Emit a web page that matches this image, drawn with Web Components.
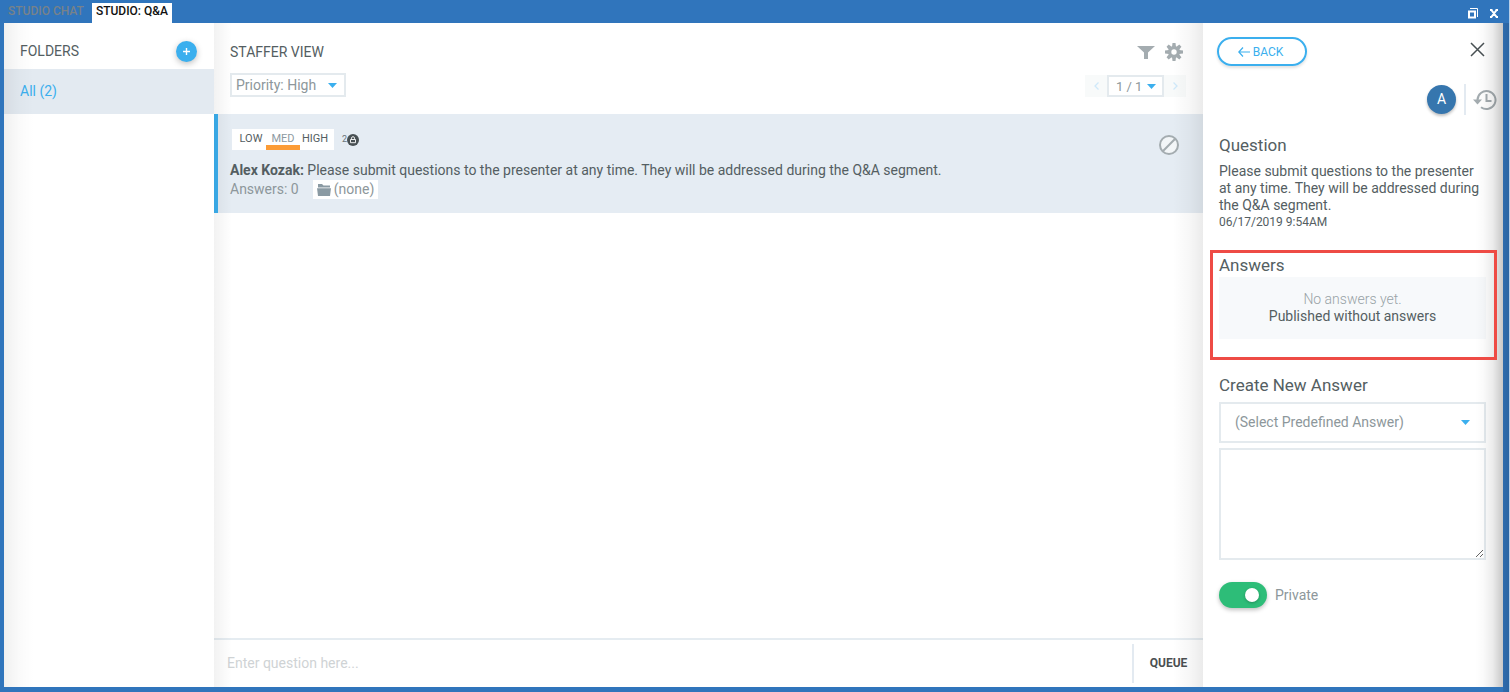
<!DOCTYPE html>
<html lang="en">
<head>
<meta charset="utf-8">
<title>Studio: Q&amp;A</title>
<style>
  html, body { height: 100%; margin: 0; }
  body { font-family: Roboto, "Liberation Sans", sans-serif; font-size: 14px; line-height: 17px; color: #545e62; background: #3075bc; }
</style>
</head>
<body>
<studio-window></studio-window>

<script>
const base = `
  *, *::before, *::after { box-sizing: border-box; }
  button, input, select, textarea { font: inherit; color: inherit; margin: 0; padding: 0; border: 0; background: none; border-radius: 0; outline: 0; }
  button { cursor: pointer; }
  h1, h2, p { margin: 0; font-weight: 400; font-size: inherit; }
  svg { display: block; flex: none; }
`;
class Base extends HTMLElement {
  constructor() {
    super();
    this.attachShadow({ mode: "open" }).innerHTML = `<style>${base}${this.constructor.css}</style>${this.render()}`;
  }
  render() { return "<slot></slot>"; }
}

/* Drop-down with a blue caret */
class DropDown extends Base {
  static css = `
    :host { display: inline-grid; align-items: center; border: 2px solid #e4eaee; background: #fff; color: #8d979b; }
    select { grid-area: 1 / 1; width: 100%; height: 100%; appearance: none; padding: 0 var(--pad-right, 26px) 0 var(--pad-left, 4px); }
    svg { grid-area: 1 / 1; justify-self: end; margin-right: var(--caret-gap, 7px); pointer-events: none; }
  `;
  render() {
    return `<select aria-label="${this.getAttribute("label")}"><option>${this.getAttribute("value")}</option></select>
      <svg width="9" height="5" viewBox="0 0 9 5"><path d="M0 0h9L4.500 5z" fill="#3bafee"/></svg>`;
  }
}
customElements.define("drop-down", DropDown);

class TitleBar extends Base {
  static css = `
    :host { display: flex; align-items: flex-end; height: 23px; padding-left: 4px; color: #fff; }
    nav { display: flex; flex: 1; }
    a { font-size: 12px; font-weight: 500; line-height: 17px; height: 20px; padding: 0 4px; color: #77828a; text-decoration: none; margin-right: 4px; }
    a[aria-current] { background: #fff; color: #111; }
    .tools { display: flex; gap: 11px; align-items: center; height: 20px; padding-right: 10px; }
  `;
  render() {
    return `<nav><a href="#chat">STUDIO CHAT</a><a href="#qa" aria-current="page">STUDIO: Q&amp;A</a></nav>
      <div class="tools">
        <button aria-label="Restore"><svg width="10" height="11" viewBox="0 0 10 11" fill="none" stroke="#fff"><path d="M2 .5h7.500v8.500" /><path d="M1 3.500h6v6H1z" stroke-width="2"/></svg></button>
        <button aria-label="Close"><svg width="10" height="9" viewBox="0 0 10 9" fill="none" stroke="#fff" stroke-width="2"><path d="M1 1h2.500M6.500 1H9M1 8h2.500M6.500 8H9M2 .5l6 8M8 .5l-6 8"/></svg></button>
      </div>`;
  }
}
customElements.define("title-bar", TitleBar);

class FolderList extends Base {
  static css = `
    :host { display: block; position: relative; background: #fff; }
    :host::after { content: ""; position: absolute; inset: 0 auto 0 0; width: 30px; pointer-events: none; background: linear-gradient(to right, rgba(0,0,0,.06), rgba(0,0,0,.02) 50%, transparent); }
    header { display: flex; align-items: center; justify-content: space-between; height: 46px; padding: 11px 17px 0 16px; }
    button { width: 21px; height: 21px; border-radius: 50%; background: #3bafee; display: grid; place-items: center; box-shadow: 0 2px 6px rgba(0,0,0,.25); }
    a { display: block; line-height: 45px; padding-left: 16px; background: #e3eaf1; color: #3bafee; text-decoration: none; }
  `;
  render() {
    return `<header><h2>FOLDERS</h2><button aria-label="Add folder"><svg width="7" height="7" viewBox="0 0 7 7"><path d="M3.500 0v7M0 3.500h7" stroke="#fff" stroke-width="1.400"/></svg></button></header>
      <a href="#all">All (2)</a>`;
  }
}
customElements.define("folder-list", FolderList);

class PagerControl extends Base {
  static css = `
    :host { display: flex; height: 22px; font-size: 13px; }
    button { width: 22px; background: #f8fafa; display: grid; place-items: center; }
    drop-down { width: 57px; --pad-left: 7px; --pad-right: 20px; --caret-gap: 6px; }
  `;
  render() {
    return `<button aria-label="Previous page"><svg width="5" height="8" viewBox="0 0 5 8"><path d="M4.500.5L1 4l3.500 3.500" fill="none" stroke="#cfe9fa" stroke-width="1.300"/></svg></button>
      <drop-down label="Page" value="1 / 1"></drop-down>
      <button aria-label="Next page"><svg width="5" height="8" viewBox="0 0 5 8"><path d="M.5.5L4 4 .5 7.500" fill="none" stroke="#cfe9fa" stroke-width="1.300"/></svg></button>`;
  }
}
customElements.define("pager-control", PagerControl);

class QuestionCard extends Base {
  static css = `
    :host { display: flex; justify-content: space-between; align-items: flex-start; height: 99px; background: #e5ecf3; border-left: 4px solid #3bafee; padding: 15px 24px 0 12px; }
    .top { display: flex; align-items: center; margin-left: 2px; }
    .priority { display: flex; background: #fff; width: 102px; height: 21px; font-size: 11px; }
    .priority button { width: 34px; height: 21px; padding-top: 3px; border-bottom: 5px solid transparent; line-height: 13px; }
    .priority button:first-child { padding-left: 4px; }
    .priority [aria-pressed=true] { color: #8d9aa1; border-color: #fc9c36; }
    .priority button:last-child { padding-right: 4px; }
    .count { display: flex; align-items: center; font-size: 9px; color: #6b7579; margin-left: 8px; }
    .text { margin-top: 12px; }
    .meta { display: flex; align-items: center; color: #8d979b; gap: 14px; margin-top: 1px; }
    .folder { display: flex; align-items: center; gap: 3px; height: 19px; padding: 0 4px; background: #fff; color: #8d979b; }
    .ban { margin-top: 6px; }
  `;
  render() {
    return `<div>
        <div class="top">
          <div class="priority" role="group" aria-label="Priority"><button>LOW</button><button aria-pressed="true">MED</button><button>HIGH</button></div>
          <span class="count">2<svg width="12" height="12" viewBox="0 0 12 12"><circle cx="6" cy="6" r="6" fill="#485053"/><path d="M3.500 5.500h5v3.200h-5zM4.500 5.300V4.200a1.500 1.500 0 0 1 3 0v1.100" fill="none" stroke="#fff" stroke-width=".9"/></svg></span>
        </div>
        <p class="text"><slot></slot></p>
        <div class="meta"><span>Answers: 0</span>
          <button class="folder"><svg width="14" height="12" viewBox="0 0 14 12" fill="#8a9aa3"><path d="M1 0h4l1.500 1.500H13V3.500H1z"/><path d="M0 4.300h14L13 12H1z"/></svg>(none)</button></div>
      </div>
      <button class="ban" aria-label="Reject question"><svg width="20" height="20" viewBox="0 0 20 20" fill="#f3f6f8" stroke="#a4acb0" stroke-width="2"><circle cx="10" cy="10" r="9"/><path d="M3.800 16.200L16.200 3.800"/></svg></button>`;
  }
}
customElements.define("question-card", QuestionCard);

class StafferView extends Base {
  static css = `
    :host { display: flex; flex-direction: column; position: relative; min-width: 0; background: #fff; }
    :host::before, :host::after { content: ""; position: absolute; top: 0; bottom: 0; pointer-events: none; }
    :host::before { left: 0; width: 18px; background: linear-gradient(to right, rgba(0,0,0,.05), transparent); }
    :host::after { right: 0; width: 30px; background: linear-gradient(to left, rgba(0,0,0,.08), rgba(0,0,0,.03) 45%, transparent); }
    header { height: 91px; padding: 18px 17px 0 16px; }
    .row { display: flex; justify-content: space-between; align-items: center; }
    .icons { display: flex; gap: 10px; padding-right: 3px; height: 22px; align-items: center; }
    .filters { margin-top: 10px; }
    .filters > drop-down { width: 116px; height: 24px; }
    pager-control { margin-top: 2px; }
    main { flex: 1; }
    form { display: flex; align-items: stretch; border-top: 2px solid #e5ecf1; height: 49px; padding: 4px 0; }
    input { flex: 1; padding: 0 13px; min-width: 0; }
    input::placeholder { color: #cfd3d5; }
    form button { width: 71px; border-left: 2px solid #e3eaf1; font-size: 12px; font-weight: 700; color: #4b4f51; }
  `;
  render() {
    return `<header>
        <div class="row"><h1>STAFFER VIEW</h1><div class="icons">
          <button aria-label="Filter"><svg width="18" height="13" viewBox="0 0 18 13"><path d="M0 0h18L11 6.500V13H7V6.500z" fill="#a4acb0"/></svg></button>
          <button aria-label="Settings"><svg width="18" height="18" viewBox="-9 -9 18 18"><g fill="#a4acb0"><circle r="6"/><path id="t" d="M-1.500-9h3l.5 4h-4z"/><use href="#t" transform="rotate(45)"/><use href="#t" transform="rotate(90)"/><use href="#t" transform="rotate(135)"/><use href="#t" transform="rotate(180)"/><use href="#t" transform="rotate(225)"/><use href="#t" transform="rotate(270)"/><use href="#t" transform="rotate(315)"/></g><circle r="2.700" fill="#fff"/></svg></button>
        </div></div>
        <div class="row filters"><drop-down label="Priority filter" value="Priority: High"></drop-down><pager-control></pager-control></div>
      </header>
      <main><slot></slot></main>
      <form><input type="text" aria-label="Question" placeholder="Enter question here..."><button type="button">QUEUE</button></form>`;
  }
}
customElements.define("staffer-view", StafferView);

class ToggleSwitch extends Base {
  static css = `
    :host { display: block; }
    label { display: flex; align-items: center; gap: 8px; color: #8d979b; }
    input { appearance: none; width: 48px; height: 26px; border-radius: 13px; background: #2dbd78; padding: 6px 8px; display: flex; justify-content: flex-end; box-shadow: 0 2px 4px rgba(0,0,0,.25); }
    input::before { content: ""; width: 14px; height: 14px; border-radius: 50%; background: #fff; box-shadow: 0 1px 3px rgba(0,0,0,.25); }
    input:not(:checked) { background: #b9c2c6; justify-content: flex-start; }
  `;
  render() { return `<label><input type="checkbox" checked><slot></slot></label>`; }
}
customElements.define("toggle-switch", ToggleSwitch);

class AnswerPanel extends Base {
  static css = `
    :host { display: block; position: relative; background: #fff; padding: 14px 17px 0 16px; }
    :host::after { content: ""; position: absolute; inset: 0 0 0 auto; width: 28px; pointer-events: none; background: linear-gradient(to left, rgba(0,0,0,.22), rgba(0,0,0,.08) 36%, rgba(0,0,0,.02) 70%, transparent); }
    .bar { display: flex; justify-content: space-between; align-items: flex-start; margin-left: -2px; }
    .back { display: flex; align-items: center; justify-content: center; gap: 3px; width: 90px; height: 29px; padding: 1px 3px 0 0; border: 2px solid #3bafee; border-radius: 15px; color: #3bafee; font-size: 12px; box-shadow: 0 2px 3px rgba(0,0,0,.12); }
    .close { margin: 5px 1px 0 0; }
    .user { display: flex; justify-content: flex-end; align-items: center; height: 31px; margin: 18px -11px 0 0; }
    .avatar { width: 29px; height: 29px; border-radius: 50%; background: #3676ae; color: #fff; display: grid; place-items: center; box-shadow: 0 2px 3px rgba(0,0,0,.25); margin-right: 8px; }
    .history { border-left: 2px solid #e3eaf1; height: 31px; padding-left: 7px; }
    h2 { font-size: 17px; line-height: 20px; }
    .question { margin-top: 20px; }
    .question p { margin-top: 8px; }
    time { display: block; font-size: 12px; }
    .answers { position: relative; margin-top: 24px; }
    .answers::after { content: ""; position: absolute; inset: -5px -11px -21px -9px; border: 3px solid #ee4b45; z-index: 1; pointer-events: none; }
    .empty { margin-top: 2px; height: 62px; padding-top: 14px; background: #f7f9fb; text-align: center; }
    .empty p:first-child { color: #98a2a6; font-weight: 300; }
    .create { margin-top: 36px; display: grid; }
    drop-down { height: 41px; margin-top: 7px; --pad-left: 14px; --caret-gap: 14px; }
    textarea { height: 112px; margin-top: 5px; border: 2px solid #e4eaee; padding: 8px; }
    toggle-switch { margin-top: 22px; }
  `;
  render() {
    return `<div class="bar">
        <button class="back"><svg width="12" height="10" viewBox="0 0 12 10"><path d="M12 5H1M5 .5L.800 5 5 9.500" fill="none" stroke="#3bafee" stroke-width="1.200"/></svg>BACK</button>
        <button class="close" aria-label="Close panel"><svg width="15" height="15" viewBox="0 0 15 15"><path d="M1 1l13 13M14 1L1 14" stroke="#485053" stroke-width="1.500"/></svg></button>
      </div>
      <div class="user"><span class="avatar">A</span>
        <button class="history" aria-label="History"><svg width="24" height="22" viewBox="0 0 24 22" fill="none" stroke="#a4acb0" stroke-width="2"><path d="M4.500 11A9 9 0 1 1 8 18.200"/><path d="M13.500 5v7h5"/><path d="M0 10.500h9L4.500 15.500z" fill="#a4acb0" stroke="none"/></svg></button></div>
      <section class="question"><h2>Question</h2><p>Please submit questions to the presenter at any time. They will be addressed during the Q&amp;A segment.</p><time>06/17/2019 9:54AM</time></section>
      <section class="answers"><h2>Answers</h2><div class="empty"><p>No answers yet.</p><p>Published without answers</p></div></section>
      <section class="create"><h2>Create New Answer</h2>
        <drop-down label="Predefined answer" value="(Select Predefined Answer)"></drop-down>
        <textarea aria-label="Answer"></textarea></section>
      <toggle-switch>Private</toggle-switch>`;
  }
}
customElements.define("answer-panel", AnswerPanel);

class StudioWindow extends Base {
  static css = `
    :host { display: flex; flex-direction: column; min-height: 100vh; background: #3075bc; border-right: 1px solid #b9cfe8; }
    .body { flex: 1; display: grid; grid-template-columns: 210px minmax(0, 1fr) 300px; padding: 0 6px 5px 4px; background: linear-gradient(to left, #2a64a2, #2d6bad 6px, transparent 6px); }
  `;
  render() {
    return `<title-bar></title-bar><div class="body"><folder-list></folder-list>
      <staffer-view><question-card><b>Alex Kozak:</b> Please submit questions to the presenter at any time. They will be addressed during the Q&amp;A segment.</question-card></staffer-view>
      <answer-panel></answer-panel></div>`;
  }
}
customElements.define("studio-window", StudioWindow);
</script>
</body>
</html>
